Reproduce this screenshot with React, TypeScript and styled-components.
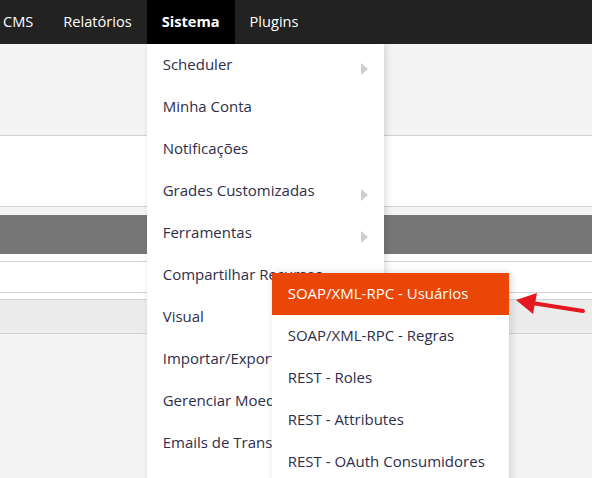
import React from "react";
import styled, { createGlobalStyle } from "styled-components";

const Global = createGlobalStyle`
  html, body { margin: 0; padding: 0; background: #f4f4f4; }
  body { font-family: "Open Sans", "Noto Sans", sans-serif; overflow: hidden; }
`;

const Page = styled.div`
  position: relative;
  width: 592px;
  height: 478px;
  overflow: hidden;
  background: #f4f4f4;
`;

const NavBar = styled.nav`
  display: flex;
  height: 44px;
  background: #222222;
  margin-left: -12px;
`;

const NavItem = styled.div<{ $active?: boolean }>`
  position: relative;
  padding: 0 15px 0 15px;
  line-height: 42px;
  height: 44px;
  font-size: 14.6px;
  color: #ffffff;
  font-weight: ${(p) => (p.$active ? 700 : 400)};
  background: ${(p) => (p.$active ? "#000000" : "transparent")};
  white-space: nowrap;
`;

const Band = styled.div<{ $h: number; $bg: string; $line?: boolean }>`
  height: ${(p) => p.$h}px;
  background: ${(p) => p.$bg};
  border-bottom: ${(p) => (p.$line ? "1px solid #d2d2d2" : "none")};
`;

const Dropdown = styled.ul`
  position: absolute;
  top: 44px;
  left: 0;
  width: 237px;
  height: 460px;
  margin: 0;
  padding: 0;
  list-style: none;
  background: #ffffff;
  box-shadow: 2px 0 7px rgba(0, 0, 0, 0.14);
  display: flex;
  flex-direction: column;
  font-weight: 400;
  line-height: normal;
  z-index: 5;
`;

const Item = styled.li<{ $hover?: boolean }>`
  position: relative;
  display: flex;
  align-items: center;
  justify-content: space-between;
  box-sizing: border-box;
  height: 42px;
  padding: 0 16px 2px 16px;
  font-size: 15px;
  font-weight: 400;
  color: ${(p) => (p.$hover ? "#ffffff" : "#2e2e4a")};
  background: ${(p) => (p.$hover ? "#e94607" : "transparent")};
  white-space: nowrap;
  flex-shrink: 0;
`;

const Caret = styled.span`
  width: 0;
  height: 0;
  border-top: 6px solid transparent;
  border-bottom: 6px solid transparent;
  border-left: 7px solid #cfcfcf;
  margin-top: 10px;
`;

const Submenu = styled.ul`
  position: absolute;
  top: 19px;
  left: 125px;
  width: 237px;
  height: 230px;
  margin: 0;
  padding: 0;
  list-style: none;
  background: #ffffff;
  box-shadow: 2px 0 8px rgba(0, 0, 0, 0.14);
  display: flex;
  flex-direction: column;
  z-index: 6;
`;

const Arrow = styled.svg`
  position: absolute;
  left: 510px;
  top: 288px;
  z-index: 10;
`;

const Anchor = styled.div`
  position: absolute;
  top: 0;
  left: 0;
  width: 100%;
`;

const menu: { label: string; caret?: boolean; sub?: boolean }[] = [
  { label: "Scheduler", caret: true },
  { label: "Minha Conta" },
  { label: "Notificações" },
  { label: "Grades Customizadas", caret: true },
  { label: "Ferramentas", caret: true },
  { label: "Compartilhar Recursos", sub: true },
  { label: "Visual" },
  { label: "Importar/Exportar" },
  { label: "Gerenciar Moedas" },
  { label: "Emails de Transação" },
];

const subItems = [
  "SOAP/XML-RPC - Usuários",
  "SOAP/XML-RPC - Regras",
  "REST - Roles",
  "REST - Attributes",
  "REST - OAuth Consumidores",
];

export default function App() {
  return (
    <Page>
      <Global />
      <NavBar>
        <NavItem>CMS</NavItem>
        <NavItem>Relatórios</NavItem>
        <NavItem $active>
          Sistema
          <Anchor>
            <Dropdown>
              {menu.map((m) => (
                <Item key={m.label}>
                  <span>{m.label}</span>
                  {m.caret && <Caret />}
                  {m.sub && (
                    <Submenu>
                      {subItems.map((s, i) => (
                        <Item key={s} $hover={i === 0}>
                          <span>{s}</span>
                        </Item>
                      ))}
                    </Submenu>
                  )}
                </Item>
              ))}
            </Dropdown>
          </Anchor>
        </NavItem>
        <NavItem>Plugins</NavItem>
      </NavBar>
      <Band $h={91} $bg="#f4f4f4" $line />
      <Band $h={70} $bg="#ffffff" $line />
      <Band $h={8} $bg="#f4f4f4" />
      <Band $h={39} $bg="#777777" />
      <Band $h={7} $bg="#ffffff" $line />
      <Band $h={30} $bg="#ffffff" $line />
      <Band $h={6} $bg="#ffffff" $line />
      <Band $h={33} $bg="#ececec" $line />
      <Arrow width="80" height="34" viewBox="510 288 80 34">
        <line x1="583" y1="311" x2="532" y2="303" stroke="#e3191f" strokeWidth="4" strokeLinecap="round" />
        <polygon points="516,300 537,293 533,314" fill="#e3191f" />
      </Arrow>
    </Page>
  );
}
